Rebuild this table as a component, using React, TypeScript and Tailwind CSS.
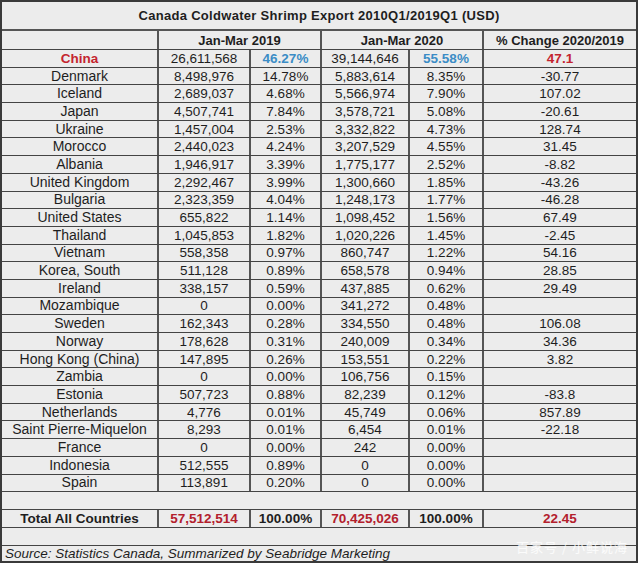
import React from "react";

type Row = [string, string, string, string, string, string];

const rows: Row[] = [
  ["China", "26,611,568", "46.27%", "39,144,646", "55.58%", "47.1"],
  ["Denmark", "8,498,976", "14.78%", "5,883,614", "8.35%", "-30.77"],
  ["Iceland", "2,689,037", "4.68%", "5,566,974", "7.90%", "107.02"],
  ["Japan", "4,507,741", "7.84%", "3,578,721", "5.08%", "-20.61"],
  ["Ukraine", "1,457,004", "2.53%", "3,332,822", "4.73%", "128.74"],
  ["Morocco", "2,440,023", "4.24%", "3,207,529", "4.55%", "31.45"],
  ["Albania", "1,946,917", "3.39%", "1,775,177", "2.52%", "-8.82"],
  ["United Kingdom", "2,292,467", "3.99%", "1,300,660", "1.85%", "-43.26"],
  ["Bulgaria", "2,323,359", "4.04%", "1,248,173", "1.77%", "-46.28"],
  ["United States", "655,822", "1.14%", "1,098,452", "1.56%", "67.49"],
  ["Thailand", "1,045,853", "1.82%", "1,020,226", "1.45%", "-2.45"],
  ["Vietnam", "558,358", "0.97%", "860,747", "1.22%", "54.16"],
  ["Korea, South", "511,128", "0.89%", "658,578", "0.94%", "28.85"],
  ["Ireland", "338,157", "0.59%", "437,885", "0.62%", "29.49"],
  ["Mozambique", "0", "0.00%", "341,272", "0.48%", ""],
  ["Sweden", "162,343", "0.28%", "334,550", "0.48%", "106.08"],
  ["Norway", "178,628", "0.31%", "240,009", "0.34%", "34.36"],
  ["Hong Kong (China)", "147,895", "0.26%", "153,551", "0.22%", "3.82"],
  ["Zambia", "0", "0.00%", "106,756", "0.15%", ""],
  ["Estonia", "507,723", "0.88%", "82,239", "0.12%", "-83.8"],
  ["Netherlands", "4,776", "0.01%", "45,749", "0.06%", "857.89"],
  ["Saint Pierre-Miquelon", "8,293", "0.01%", "6,454", "0.01%", "-22.18"],
  ["France", "0", "0.00%", "242", "0.00%", ""],
  ["Indonesia", "512,555", "0.89%", "0", "0.00%", ""],
  ["Spain", "113,891", "0.20%", "0", "0.00%", ""],
];

const grid = "grid grid-cols-[155px_92px_71px_88px_74px_1fr]";
const cell = "flex items-center justify-center whitespace-nowrap";
const vline = "border-l-2 border-[#555]";
const hline = "border-t-[1.5px] border-[#444]";

export default function App() {
  return (
    <div className="w-[640px] h-[564px] bg-white font-['Liberation_Sans',Arial,sans-serif] text-[13.5px] leading-[15px] text-[#1e1e1e]">
      <div className="relative w-[638px] h-[563px] border-2 border-[#3a3a3a] bg-[#ececec] flex flex-col overflow-hidden">
        {/* title */}
        <div className="h-[29px] shrink-0 flex items-center justify-center font-bold text-[13px] tracking-[0.3px] border-b-2 border-[#555]">
          Canada Coldwater Shrimp Export 2010Q1/2019Q1 (USD)
        </div>

        {/* column headers */}
        <div className={`${grid} h-[18px] shrink-0 font-bold text-[13px]`}>
          <div />
          <div className={`${cell} ${vline} col-span-2`}>Jan-Mar 2019</div>
          <div className={`${cell} ${vline} col-span-2`}>Jan-Mar 2020</div>
          <div className={`${cell} ${vline}`}>% Change 2020/2019</div>
        </div>

        {/* countries */}
        <div className="h-[442px] shrink-0 flex flex-col">
          {rows.map((r, i) => (
            <div key={r[0]} className={`${grid} flex-1 min-h-0 ${hline}`}>
              <div className={`${cell} ${i === 0 ? "font-bold text-[#c4242f]" : "text-[14px]"}`}>{r[0]}</div>
              <div className={`${cell} ${vline}`}>{r[1]}</div>
              <div className={`${cell} ${vline} ${i === 0 ? "font-bold text-[#3b8cc6]" : ""}`}>{r[2]}</div>
              <div className={`${cell} ${vline}`}>{r[3]}</div>
              <div className={`${cell} ${vline} ${i === 0 ? "font-bold text-[#3b8cc6]" : ""}`}>{r[4]}</div>
              <div className={`${cell} ${vline} ${i === 0 ? "font-bold text-[#c4242f]" : ""}`}>{r[5]}</div>
            </div>
          ))}
        </div>

        <div className={`h-[18px] shrink-0 ${hline}`} />

        {/* totals */}
        <div className={`${grid} h-[18px] shrink-0 ${hline} font-bold`}>
          <div className={cell}>Total All Countries</div>
          <div className={`${cell} ${vline} text-[#b3202c]`}>57,512,514</div>
          <div className={`${cell} ${vline}`}>100.00%</div>
          <div className={`${cell} ${vline} text-[#b3202c]`}>70,425,026</div>
          <div className={`${cell} ${vline}`}>100.00%</div>
          <div className={`${cell} ${vline} text-[#b3202c]`}>22.45</div>
        </div>

        <div className={`h-[18px] shrink-0 ${hline}`} />

        <div className={`flex-1 min-h-0 ${hline} flex items-center px-[3px] italic text-[13.5px]`}>
          Source: Statistics Canada, Summarized by Seabridge Marketing
        </div>

        <div className="absolute right-[8px] bottom-[6px] text-[13px] leading-[16px] text-white/80 font-['Noto_Sans_CJK_SC',sans-serif] tracking-[1px]">
          百家号 / 小鲜说海
        </div>
      </div>
    </div>
  );
}
